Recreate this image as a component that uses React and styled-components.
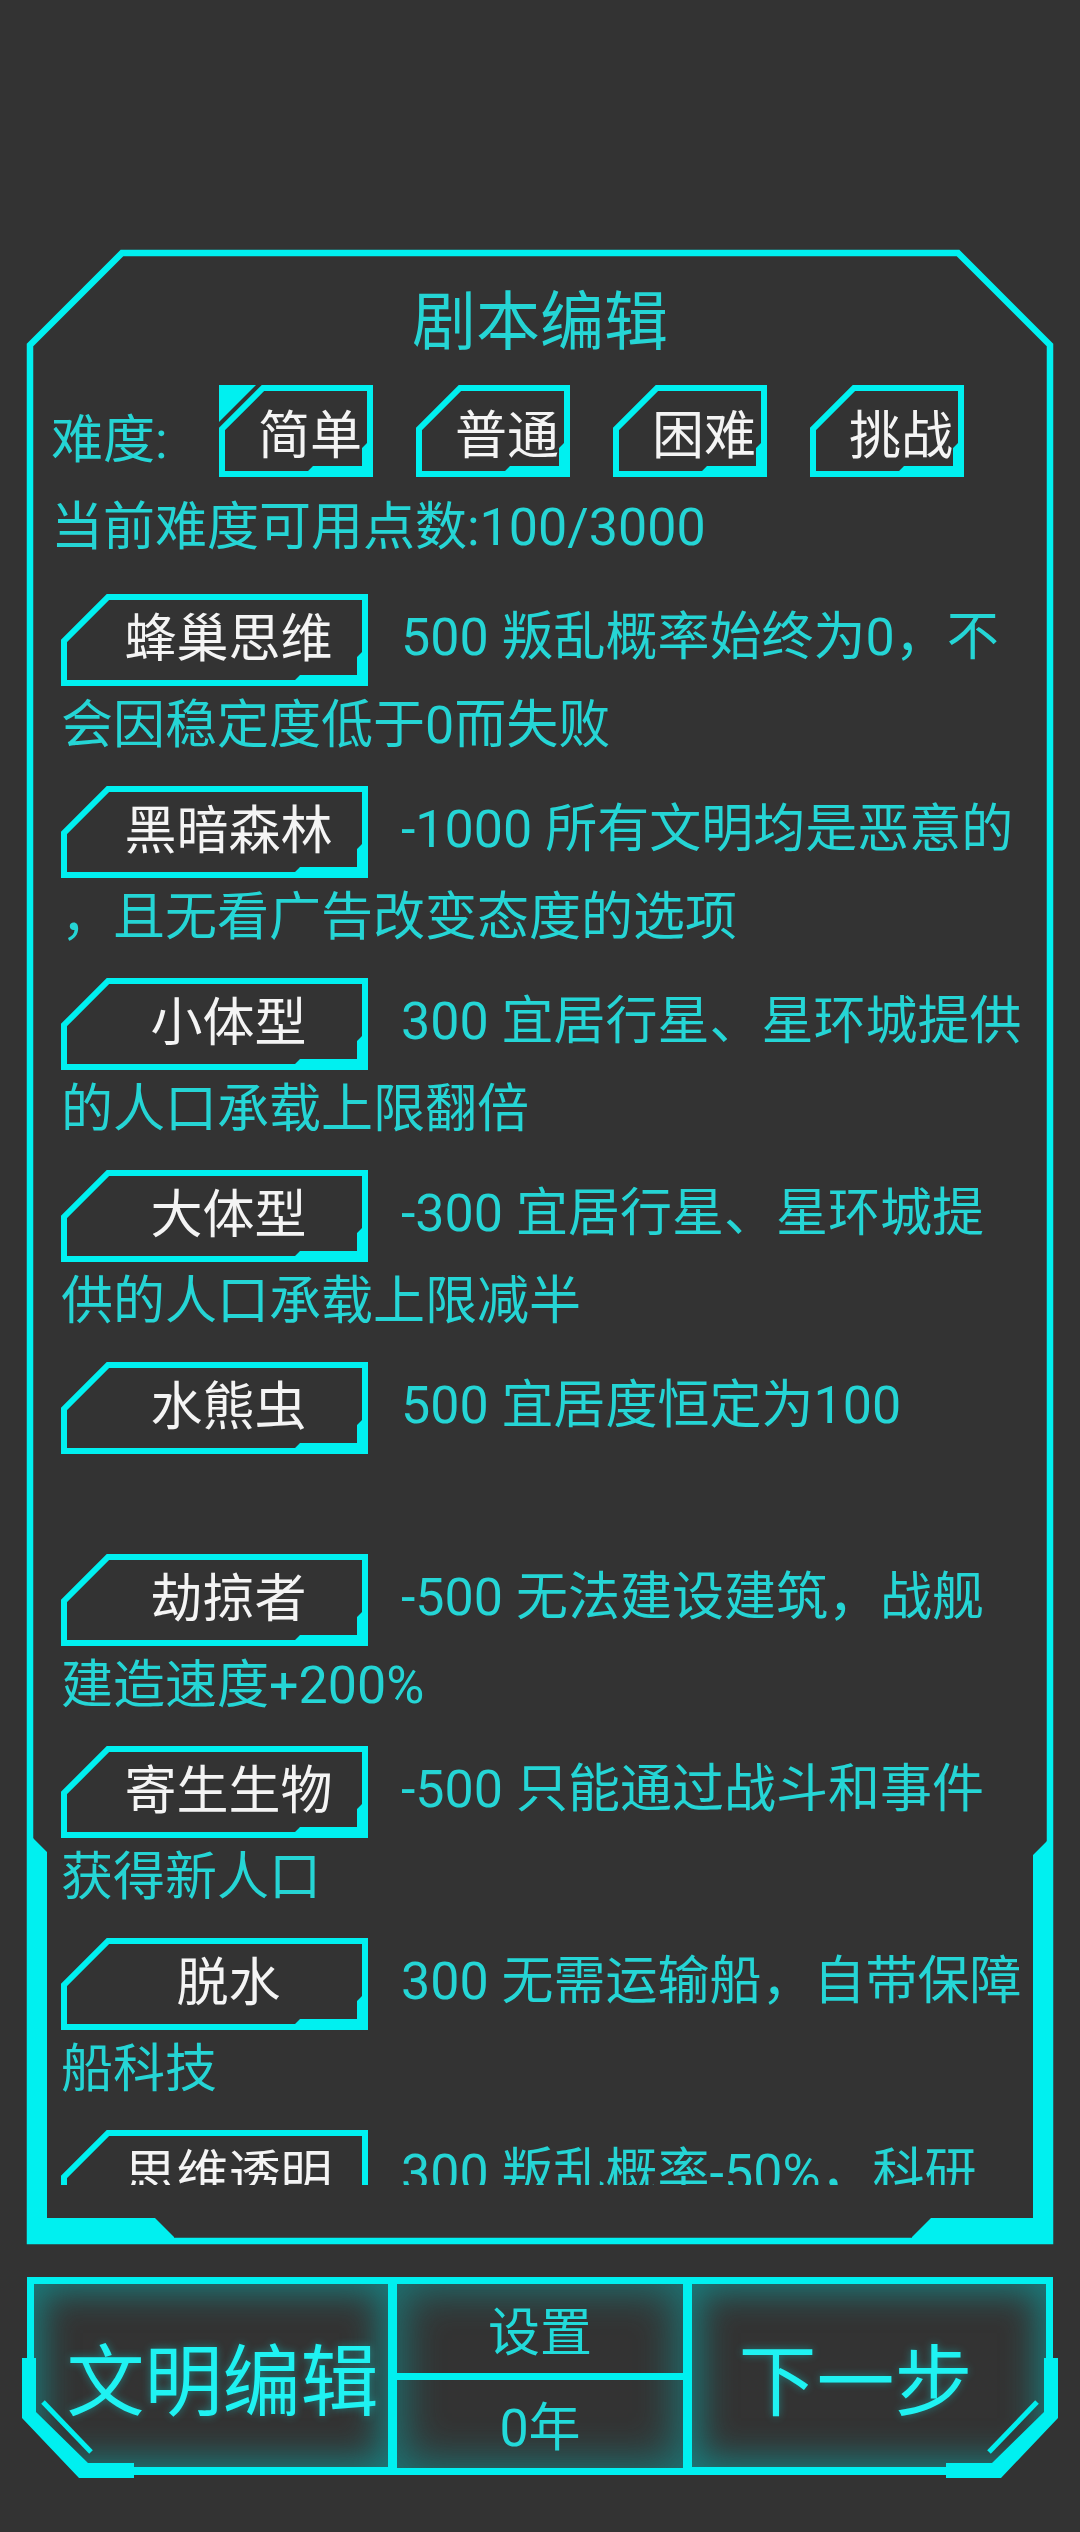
import React from 'react';
import styled, { createGlobalStyle } from 'styled-components';

const CYAN = '#00f0f0';
const TEXT = '#25d5d5';
const BG = '#333333';

const GlobalStyle = createGlobalStyle`
  html, body {
    margin: 0;
    padding: 0;
    background: ${BG};
  }
  body {
    font-family: Roboto, "Noto Sans CJK SC", "Noto Sans", sans-serif;
  }
  * { box-sizing: border-box; }
`

const Page = styled.div`
  width: 1080px;
  min-height: 2532px;
  padding-top: 250px;
  background: ${BG};
  overflow: hidden;
`

const Panel = styled.section`
  position: relative;
  margin: 0 27px;
  height: 1994px;
  padding-top: 28px;
`

const FrameSvg = styled.svg`
  position: absolute;
  left: 0;
  top: 0;
  overflow: visible;
  pointer-events: none;
`

const Title = styled.h1`
  margin: 0;
  text-align: center;
  font-size: 64px;
  line-height: 90px;
  font-weight: 400;
  color: ${TEXT};
`

const DifficultyRow = styled.div`
  display: flex;
  align-items: center;
  gap: 43px;
  margin-top: 17px;
  padding-left: 24px;
  height: 92px;
`

const RowLabel = styled.span`
  width: 125px;
  padding-top: 8px;
  font-size: 52px;
  color: ${TEXT};
`

const DiffButton = styled.div`
  position: relative;
  width: 154px;
  height: 92px;
  display: flex;
  align-items: center;
  justify-content: center;
  padding-left: 28px;
  font-size: 52px;
  color: #f4f4f4;
`

const Points = styled.div`
  margin-top: 16px;
  padding-left: 24px;
  font-size: 52px;
  line-height: 70px;
  color: ${TEXT};
`

const TraitList = styled.div`
  margin-top: 31px;
  height: 1591px;
  overflow: hidden;
  padding: 0 26px 0 34px;
`

const Trait = styled.div`
  display: flow-root;
  min-height: 176px;
  margin-bottom: 16px;
  font-size: 52px;
  line-height: 88px;
  color: ${TEXT};
  line-break: anywhere;
`

const Tag = styled.div`
  float: left;
  position: relative;
  width: 307px;
  height: 92px;
  margin: 0 33px -6px 0;
  display: flex;
  align-items: center;
  justify-content: center;
  padding-left: 28px;
  line-height: 1;
  color: #f4f4f4;
`

const Label = styled.span`
  position: relative;
`

const BottomBar = styled.div`
  display: flex;
  margin: 33px 27px 0;
  height: 198px;
`

const BigButton = styled.div`
  position: relative;
  width: 361px;
  height: 198px;
  display: flex;
  align-items: center;
  justify-content: center;
  padding: ${p => (p.$side === 'left' ? '0 0 0 30px' : '0 34px 0 0')};
  font-size: 78px;
  color: #1ff2f2;
  text-shadow: 0 0 8px rgba(0, 255, 255, 0.35);
`

const Glow = styled.div`
  position: absolute;
  top: 7px;
  bottom: 8px;
  left: ${p => (p.$side === 'left' ? '7px' : '0')};
  right: ${p => (p.$side === 'left' ? '0' : '7px')};
  box-shadow: inset 0 0 34px 8px rgba(0, 200, 200, 0.5);
  clip-path: ${p =>
    p.$side === 'left'
      ? 'polygon(0 0, 100% 0, 100% 100%, 48px 100%, 0 calc(100% - 52px))'
      : 'polygon(0 0, 100% 0, 100% calc(100% - 52px), calc(100% - 48px) 100%, 0 100%)'};
`

const MiddleColumn = styled.div`
  width: 304px;
  height: 198px;
  display: flex;
  flex-direction: column;
  border: 7px solid ${CYAN};
  border-left-width: 9px;
  border-right-width: 9px;
  box-shadow: inset 0 0 40px 6px rgba(0, 200, 200, 0.45);
`

const Cell = styled.div`
  flex: 1;
  display: flex;
  align-items: center;
  justify-content: center;
  font-size: 52px;
  color: #22dada;
`

const Divider = styled.div`
  height: 7px;
  background: ${CYAN};
`

const levels = [
  { name: '简单', selected: true },
  { name: '普通' },
  { name: '困难' },
  { name: '挑战' },
];

const traits = [
  ['蜂巢思维', '500 叛乱概率始终为0，不会因稳定度低于0而失败'],
  ['黑暗森林', '-1000 所有文明均是恶意的，且无看广告改变态度的选项'],
  ['小体型', '300 宜居行星、星环城提供的人口承载上限翻倍'],
  ['大体型', '-300 宜居行星、星环城提供的人口承载上限减半'],
  ['水熊虫', '500 宜居度恒定为100'],
  ['劫掠者', '-500 无法建设建筑，战舰建造速度+200%'],
  ['寄生生物', '-500 只能通过战斗和事件获得新人口'],
  ['脱水', '300 无需运输船，自带保障船科技'],
  ['思维透明', '300 叛乱概率-50%，科研速度-30%'],
];

function ChamferFrame({ w, h, cut, decoW, selected }) {
  return (
    <FrameSvg width={w} height={h} viewBox={`0 0 ${w} ${h}`}>
      {selected && <polygon points="0,0 37,0 0,37" fill={CYAN} />}
      <polygon
        points={`${cut},3 ${w - 3},3 ${w - 3},${h - 3} 3,${h - 3} 3,${cut}`}
        fill="none"
        stroke={CYAN}
        strokeWidth="6"
      />
      <polygon
        points={`${w - 6},${h - 34} ${w - 6},${h - 6} ${w - decoW - 5},${h - 6} ${w - decoW},${h - 11} ${w - 11},${h - 11} ${w - 11},${h - 29}`}
        fill={CYAN}
      />
    </FrameSvg>
  );
}

function PanelFrame({ w, h }) {
  const c = 95;
  return (
    <FrameSvg width={w} height={h} viewBox={`0 0 ${w} ${h}`}>
      <polygon
        points={`${c},3 ${w - c},3 ${w - 3},${c} ${w - 3},${h - 3} 3,${h - 3} 3,${c}`}
        fill="none"
        stroke={CYAN}
        strokeWidth="6.5"
      />
      <polygon
        points={`0,1588 6,1588 20,1602 20,${h - 26} 128,${h - 26} 147,${h - 7} 147,${h} 0,${h}`}
        fill={CYAN}
      />
      <polygon
        points={`${w},1591 ${w - 6},1591 ${w - 20},1605 ${w - 20},${h - 26} ${w - 122},${h - 26} ${w - 141},${h - 7} ${w - 141},${h} ${w},${h}`}
        fill={CYAN}
      />
    </FrameSvg>
  );
}

// frame of the big bottom buttons, drawn for the left one and mirrored for the right
function BigFrame({ side }) {
  const w = 361;
  const h = 198;
  return (
    <FrameSvg width={w} height={h} viewBox={`0 0 ${w} ${h}`}>
      <g transform={side === 'right' ? `translate(${w},0) scale(-1,1)` : undefined}>
        <rect x="0" y="0" width={w} height="7" fill={CYAN} />
        <rect x="0" y="0" width="7" height="81" fill={CYAN} />
        <polygon points="-5,81 9,81 9,135 61,186 107,186 107,201 52,201 -5,141" fill={CYAN} />
        <rect x="107" y="190" width={w - 107} height="8" fill={CYAN} />
        <line x1="16" y1="125" x2="64" y2="175" stroke={CYAN} strokeWidth="5" />
      </g>
    </FrameSvg>
  );
}

export default function App() {
  return (
    <>
      <GlobalStyle />
      <Page>
        <Panel>
          <PanelFrame w={1026} h={1994} />
          <Title>剧本编辑</Title>
          <DifficultyRow>
            <RowLabel>难度:</RowLabel>
            {levels.map(l => (
              <DiffButton key={l.name}>
                <ChamferFrame w={154} h={92} cut={44} decoW={60} selected={l.selected} />
                <Label>{l.name}</Label>
              </DiffButton>
            ))}
          </DifficultyRow>
          <Points>当前难度可用点数:100/3000</Points>
          <TraitList>
            {traits.map(([name, desc]) => (
              <Trait key={name}>
                <Tag>
                  <ChamferFrame w={307} h={92} cut={47} decoW={68} />
                  <Label>{name}</Label>
                </Tag>
                {desc}
              </Trait>
            ))}
          </TraitList>
        </Panel>
        <BottomBar>
          <BigButton $side="left">
            <Glow $side="left" />
            <BigFrame side="left" />
            <Label>文明编辑</Label>
          </BigButton>
          <MiddleColumn>
            <Cell>设置</Cell>
            <Divider />
            <Cell>0年</Cell>
          </MiddleColumn>
          <BigButton $side="right">
            <Glow $side="right" />
            <BigFrame side="right" />
            <Label>下一步</Label>
          </BigButton>
        </BottomBar>
      </Page>
    </>
  );
}
